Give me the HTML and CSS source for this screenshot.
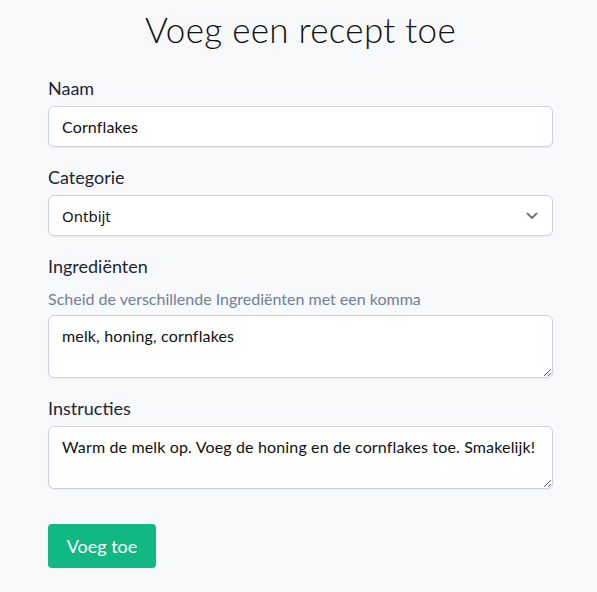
FILE: index.html
```html
<!DOCTYPE html>
<html lang="nl">
<head>
<meta charset="utf-8">
<title>Voeg een recept toe</title>
<link rel="stylesheet" href="styles.css">
</head>
<body>
<main class="page">
  <h1 class="title">Voeg een recept toe</h1>
  <form class="form">
    <div class="field">
      <label class="label" for="naam">Naam</label>
      <input class="control" id="naam" type="text" value="Cornflakes">
    </div>
    <div class="field">
      <label class="label" for="cat">Categorie</label>
      <div class="select-wrap">
        <select class="control select" id="cat">
          <option>Ontbijt</option>
        </select>
        <svg class="chev" width="12" height="8" viewBox="0 0 12 8"><path d="M1.5 1.5 L6 6 L10.5 1.5" fill="none" stroke="#6b7280" stroke-width="1.8" stroke-linecap="round" stroke-linejoin="round"/></svg>
      </div>
    </div>
    <div class="field">
      <label class="label" for="ing">Ingrediënten</label>
      <p class="hint">Scheid de verschillende Ingrediënten met een komma</p>
      <textarea class="control area" id="ing">melk, honing, cornflakes</textarea>
    </div>
    <div class="field">
      <label class="label" for="ins">Instructies</label>
      <textarea class="control area" id="ins">Warm de melk op. Voeg de honing en de cornflakes toe. Smakelijk!</textarea>
    </div>
    <div class="actions">
      <button class="btn" type="button">Voeg toe</button>
    </div>
  </form>
</main>
</body>
</html>
```
FILE: styles.css
```css
* { box-sizing: border-box; }
html, body { margin: 0; padding: 0; }
body {
  background: #f8f9fb;
  font-family: "Lato", "Open Sans", sans-serif;
  color: #1a202c;
}
.page {
  width: 505px;
  margin: 0 auto;
  padding: 9px 0 0 0;
  position: relative;
  left: 2px;
}
.title {
  margin: 0;
  text-align: center;
  font-weight: 300;
  font-size: 35px;
  line-height: 40px;
  color: #111;
  letter-spacing: 0.3px;
}
.form { display: flex; flex-direction: column; margin-top: 28px; }
.field { display: flex; flex-direction: column; margin-bottom: 19px; }
.label {
  font-size: 18px;
  line-height: 22px;
  margin-bottom: 7px;
  color: #1f2430;
}
.hint {
  margin: 6px 0 7px;
  font-size: 16px;
  line-height: 18px;
  color: #718096;
}
.control {
  width: 505px;
  height: 41px;
  border: 1px solid #cbd2e0;
  border-radius: 6px;
  background: #fff;
  box-shadow: 0 1px 2px rgba(0,0,0,0.06);
  font-family: "Lato", sans-serif;
  font-size: 16px;
  color: #111;
  padding: 0 13px;
  outline: none;
  letter-spacing: 0.15px;
}
.select-wrap { position: relative; }
.select {
  appearance: none;
  -webkit-appearance: none;
  font-family: "Noto Sans", "Open Sans", sans-serif;
  font-size: 15px;
  letter-spacing: 0;
}
.chev { position: absolute; right: 15px; top: 17px; pointer-events: none; }
.area {
  height: 63px;
  padding: 10px 13px;
  resize: vertical;
  line-height: 20px;
}
.actions { margin-top: 16px; }
.btn {
  background: #12b883;
  color: #fff;
  border: none;
  border-radius: 4px;
  width: 108px;
  height: 44px;
  font-family: "Lato", sans-serif;
  font-size: 18px;
  font-weight: 400;
  padding: 0;
}
```
